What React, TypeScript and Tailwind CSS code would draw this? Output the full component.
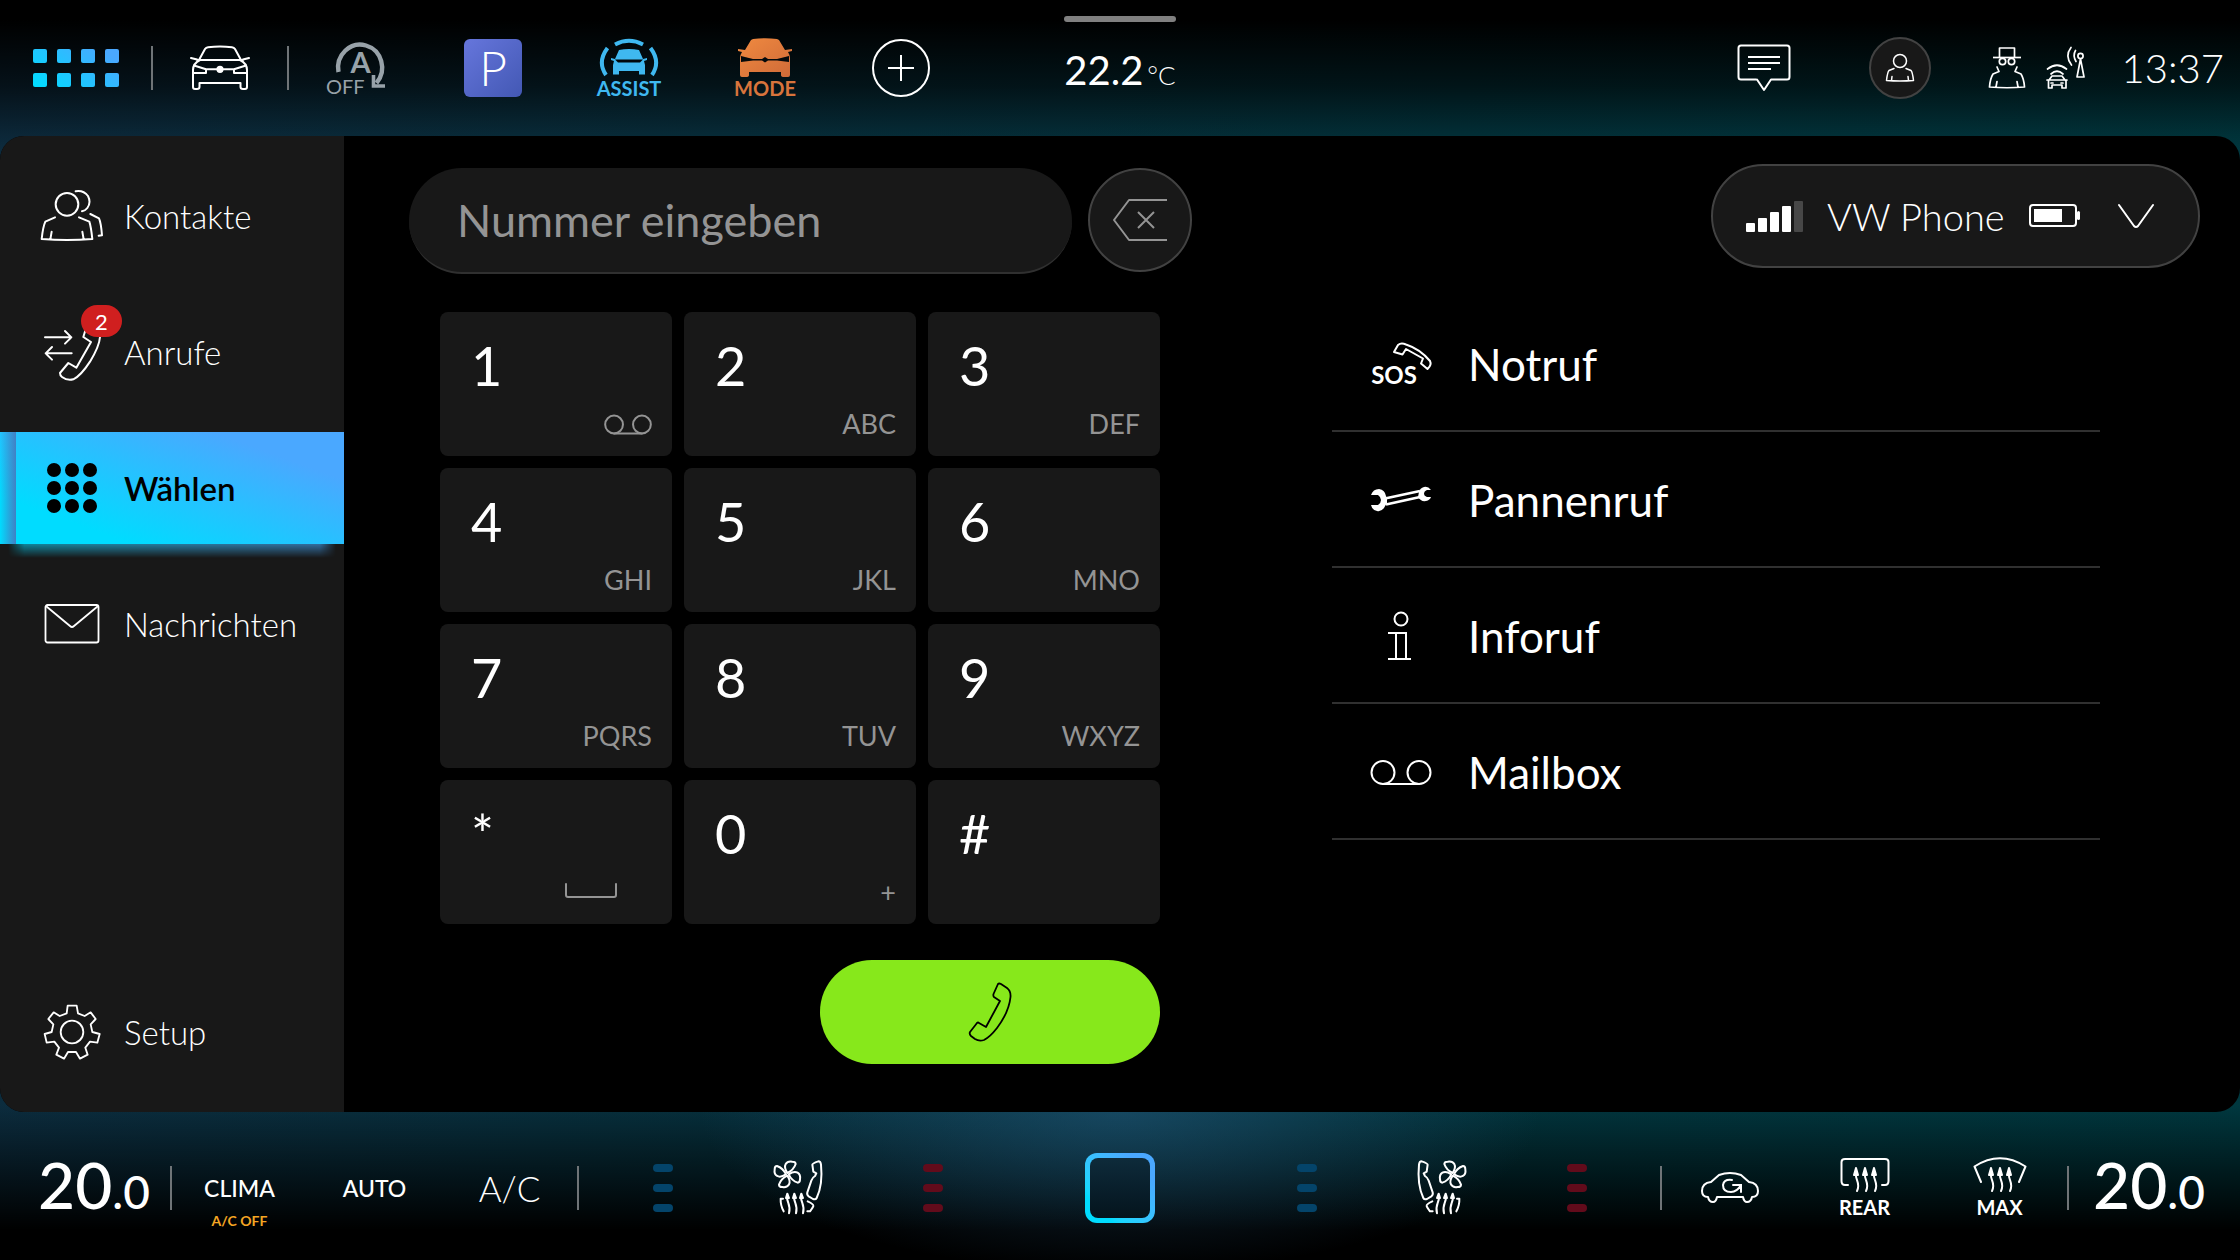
import type { ReactNode } from "react";

const BLUE = "#3fb8f0";

function Stroke({ w, h, box, sw = 2, children, color = "currentColor" }: { w: number; h: number; box?: string; sw?: number; color?: string; children: ReactNode }) {
  return (
    <svg width={w} height={h} viewBox={box ?? `0 0 ${w} ${h}`} fill="none" stroke={color} strokeWidth={sw} strokeLinejoin="round" strokeLinecap="round" aria-hidden="true" className="shrink-0">
      {children}
    </svg>
  );
}

/* ---------- header icons ---------- */

function AppGrid() {
  return (
    <svg width="88" height="40" viewBox="0 0 88 40" aria-hidden="true">
      <defs>
        <linearGradient id="apps" gradientUnits="userSpaceOnUse" x1="20" y1="50" x2="62" y2="-6">
          <stop offset="0" stopColor="#00dcff" />
          <stop offset="1" stopColor="#4aa8ff" />
        </linearGradient>
      </defs>
      {[1, 25].map((y) =>
        [1, 25, 49, 73].map((x) => <rect key={`${x}-${y}`} x={x} y={y} width="14" height="14" rx="2" fill="url(#apps)" />),
      )}
    </svg>
  );
}

function CarFront() {
  return (
    <Stroke w={60} h={46}>
      <path d="M9 15 L15 4 Q16 2.4 18 2.2 Q30 1 42 2.2 Q44 2.4 45 4 L51 15" />
      <path d="M7 15 H53 M1 13 L7 14.5 M59 13 L53 14.5" />
      <path d="M10 15 Q3 18.5 3 25 V42 Q3 44 5 44 H7 Q9.5 44 9.5 42 V38 H50.5 V42 Q50.5 44 53 44 H55 Q57 44 57 42 V25 Q57 18.5 50 15" />
      <path d="M4 20.5 L16 24.3 V28 H4 M56 20.5 L44 24.3 V28 H56 M16 24.3 H44" />
      <circle cx="30" cy="24.3" r="2.6" fill="currentColor" />
    </Stroke>
  );
}

function StartStop() {
  return (
    <svg width="62" height="54" viewBox="0 0 62 54" fill="none" stroke="#98a2a9" strokeWidth="4.4" aria-hidden="true" className="overflow-visible">
      <path d="M12.5 31 A22 23 0 1 1 50.5 42" />
      <path d="M47.5 34 V45 H59" strokeWidth="3.6" />
      <g fill="#98a2a9" stroke="none" fontFamily="Lato, sans-serif">
        <text x="34.5" y="32" fontSize="29" fontWeight="700" textAnchor="middle">A</text>
        <text x="0" y="53" fontSize="20">OFF</text>
      </g>
    </svg>
  );
}

function AssistIcon() {
  return (
    <svg width="60" height="40" viewBox="0 0 60 40" aria-hidden="true">
      <g fill="none" stroke={BLUE} strokeWidth="4">
        <path d="M16 6.5 Q30 -1 44 6.5" />
        <path d="M8.5 10 Q-2 24 7 37 M51.5 10 Q62 24 53 37" />
      </g>
      <path fill={BLUE} d="M20 12 Q30 10 40 12 L44 21 L48 20 V22 L45 23 L46 27 V36.5 H40 V33 H20 V36.5 H14 V27 L15 23 L12 22 V20 L16 21 Z" />
      <path d="M16 21.5 H44 L41 24.5 H19 Z" fill="#01080b" />
    </svg>
  );
}

function ModeIcon() {
  return (
    <svg width="54" height="40" viewBox="0 0 54 40" aria-hidden="true">
      <defs>
        <linearGradient id="mode" x1="0" y1="0" x2="1" y2="1">
          <stop offset="0" stopColor="#f08a40" />
          <stop offset="1" stopColor="#cf6a38" />
        </linearGradient>
      </defs>
      <path fill="url(#mode)" d="M15 1 Q27 -0.5 39 1 L41 2 L47 12 L54 11 V13 L50 14 Q52 17 52 20 V37 Q52 39 50 39 H46 Q43 39 43 37 V34 H11 V37 Q11 39 8 39 H4 Q2 39 2 37 V20 Q2 17 4 14 L0 13 V11 L7 12 L13 2 Z" />
      <path fill="#03090c" d="M3 18 L15 21 H24 L27 19 L30 21 H39 L51 18 V24 L39 22.5 H30 L27 24.5 L24 22.5 H15 L3 24 Z" />
    </svg>
  );
}

function MessageIcon() {
  return (
    <Stroke w={54} h={48}>
      <path d="M19 35.5 H4 Q1.5 35.5 1.5 33 V4 Q1.5 1.5 4 1.5 H50 Q52.5 1.5 52.5 4 V33 Q52.5 35.5 50 35.5 H34 L27 46 L20 35.5" />
      <path d="M11 13 H43 M11 19 H43 M11 25 H34" strokeLinecap="butt" />
    </Stroke>
  );
}

function PersonIcon() {
  return (
    <Stroke w={30} h={30} sw={1.5}>
      <circle cx="15" cy="8" r="6.5" />
      <path d="M9 15.5 L4 17.5 Q2.5 19 1.5 27.5 Q15 28.5 28.5 27.5 Q27.5 19 26 17.5 L21 15.5 M7 23.5 L6.5 27.5 M23 23.5 L23.5 27.5" />
    </Stroke>
  );
}

function IncognitoIcon() {
  return (
    <Stroke w={38} h={44} sw={1.7}>
      <path d="M11.5 11 V2 H26.5 V11" />
      <path d="M5 11.5 H33" strokeLinecap="butt" />
      <circle cx="14.5" cy="15.5" r="3.2" />
      <circle cx="23.5" cy="15.5" r="3.2" />
      <path d="M9 21 L11 25.5 L5 28 Q2 33 1.5 41 Q19 42.5 36.5 41 Q36 33 33 28 L27 25.5 L29 21 M9 35.5 L8 41 M29 35.5 L30 41" />
    </Stroke>
  );
}

function CarAntennaIcon() {
  return (
    <Stroke w={40} h={44} sw={1.7}>
      <path d="M1.5 23 Q11 15.5 20.5 23 M5 28 Q11 22.5 17 28" />
      <path d="M3 34 L6 30 H16 L19 34 M1 34 H21 M2.5 34 V42 H6 V39 H16 V42 H20 V34 M5 37 H7 M15 37 H17" />
      <circle cx="34.5" cy="10" r="2.6" />
      <path d="M34.5 13 L31 31 H38 Z M29.5 4.5 Q26.5 9.5 30 15.5 M25 1.5 Q18.5 10 25.5 19" />
    </Stroke>
  );
}

/* ---------- sidebar icons ---------- */

function ContactsIcon() {
  return (
    <Stroke w={64} h={54} box="120 149 192 162" sw={6}>
      <circle cx="201" cy="195" r="34" />
      <path d="M227 156 Q250 152 264 170 Q274 190 262 206 Q256 214 246 216" />
      <path d="M165 234 L136 247 Q129 262 125 299 Q201 305 277 299 Q273 262 268 247 L237 234 M155 277 L151 300 M247 277 L251 300" />
      <path d="M271 224 L297 237 Q303 250 306 288 L296 289" />
    </Stroke>
  );
}

function CallsIcon() {
  return (
    <Stroke w={60} h={60} box="126 545 180 180" sw={6}>
      <path d="M135 591 H214 M195 572 L214 591 L195 610 M215 639 H137 M156 620 L137 639 L156 658" />
      <path d="M262 550 L250 590 L273 605 L229 682 L205 668 L180 698 Q180 706 186 710 Q202 722 220 717 Q242 707 270 664 Q298 618 300 590 Q300 565 285 560 Z" />
    </Stroke>
  );
}

function DialIcon() {
  return (
    <svg width="50" height="50" viewBox="0 0 50 50" fill="currentColor" aria-hidden="true" className="shrink-0">
      {[7, 25, 43].map((y) => [7, 25, 43].map((x) => <circle key={`${x}-${y}`} cx={x} cy={y} r="7" />))}
    </svg>
  );
}

function MailIcon() {
  return (
    <Stroke w={56} h={40} sw={1.8}>
      <rect x="1.5" y="1" width="53" height="37.5" rx="2" />
      <path d="M2.5 2.5 L26 22 Q28 24 30 22 L53.5 2.5" />
    </Stroke>
  );
}

function GearIcon() {
  return (
    <Stroke w={58} h={56} box="129 132 174 168" sw={5.5}>
      <circle cx="216" cy="216" r="34" />
      <path d="M203 137 H230 L234 160 L254 168 L272 157 L287 177 L272 193 L277 216 L299 222 L292 248 L270 245 L256 263 L263 284 L240 296 L228 276 H204 L192 296 L169 284 L177 263 L163 245 L140 248 L134 222 L155 216 L160 193 L145 177 L161 157 L179 168 L200 160 Z" />
    </Stroke>
  );
}

/* ---------- content icons ---------- */

function VoicemailIcon({ w, h, sw }: { w: number; h: number; sw: number }) {
  return (
    <Stroke w={w} h={h} box="0 0 62 27" sw={sw}>
      <circle cx="13" cy="13.5" r="11.5" />
      <circle cx="49" cy="13.5" r="11.5" />
      <path d="M13 25 H49" />
    </Stroke>
  );
}

function SosIcon() {
  return (
    <svg width="62" height="46" viewBox="0 0 62 46" aria-hidden="true" className="shrink-0 overflow-visible">
      <path d="M24 11 L28 4 Q31 1.5 36 3.5 Q50 8 60 20 Q62 24 57.5 28 L51 22.5 L53 17.5 L36 8 L32.5 13.5 Z" fill="none" stroke="currentColor" strokeWidth="2" strokeLinejoin="round" />
      <text x="24" y="43" fontSize="24" fontWeight="700" textAnchor="middle" fill="currentColor" fontFamily="Lato, sans-serif">SOS</text>
    </svg>
  );
}

function WrenchIcon() {
  return (
    <svg width="62" height="30" viewBox="0 0 62 30" fill="none" stroke="currentColor" aria-hidden="true" className="shrink-0">
      <path d="M1 10 Q3 4 9 4 Q15 5 16 11 L17 14 V18 Q15 21 14 23 Q11 27 7 26 Q2 25 1 20 L8 20 Q11 18 11 15 Q11 12 8 10 Z" fill="currentColor" stroke="none" />
      <path d="M61 5 Q58 1 54 2 Q50 3 49 7 L48 12 Q51 17 56 16 Q60 15 61 12 L57 12 Q54 11 54 9 Q54 6 57 5 Z" fill="currentColor" stroke="none" />
      <path d="M15 13.5 L50 6 M16 19.5 L50 12" strokeWidth="2.8" />
    </svg>
  );
}

function InfoIcon() {
  return (
    <Stroke w={62} h={50}>
      <circle cx="31" cy="8" r="6.5" />
      <path d="M18 22 H36 V48 M26 22 V48 M18 48 H41" strokeLinecap="butt" strokeLinejoin="miter" />
    </Stroke>
  );
}

/* ---------- climate icons ---------- */

function SeatIcon({ mirrored = false }: { mirrored?: boolean }) {
  const petal = "M73 75 C58 52 70 38 88 41 Q98 41 98 48 Q92 66 73 75 Z";
  return (
    <svg width="70" height="80" viewBox="0 0 210 240" fill="none" stroke="currentColor" strokeWidth="6" strokeLinejoin="round" strokeLinecap="round" aria-hidden="true" className={mirrored ? "-scale-x-100" : ""}>
      {[0, 90, 180, 270].map((a) => (
        <path key={a} d={petal} transform={`rotate(${a} 73 79)`} />
      ))}
      <path d="M148 50 Q148 46 166 40 Q173 40 174 50 Q180 110 161 150 Q158 156 150 153 L137 145 Q131 141 133 133 L145 98 Q149 88 156 84 L160 76 L151 71 Z" />
      <path d="M134 160 Q152 168 151 174 Q150 178 141 190 L133 190 M60 152 H53 Q52 172 62 190" />
      {[75, 96, 117].map((x) => (
        <g key={x}>
          <path d={`M${x - 3} 146 C${x - 4} 165 ${x + 10} 170 ${x + 3} 196`} />
          <path d={`M${x - 2} 137 L${x - 6} 150 H${x + 3} Z`} fill="currentColor" />
        </g>
      ))}
    </svg>
  );
}

function RecircIcon() {
  return (
    <Stroke w={62} h={34}>
      <path d="M18 26 Q17 31 14 31 Q10 31 9 26 Q3 26 3 20 Q3 12 12 11 L20 4 Q31 0 42 4 L50 11 Q59 12 59 20 Q59 26 53 26 Q52 31 48 31 Q45 31 44 26 Z" />
      <path d="M33 9 Q25 8 24 14 Q24 21 32 21 Q38 21 42 14 M34 14 H42 V21" strokeLinejoin="miter" />
    </Stroke>
  );
}

function HeatArrows({ y }: { y: number }) {
  return (
    <g>
      {[16, 25, 34].map((x) => (
        <g key={x}>
          <path d={`M${x} ${y + 7} C${x - 1} ${y + 13} ${x + 5} ${y + 16} ${x + 1} ${y + 24}`} />
          <path d={`M${x} ${y + 1} L${x - 2} ${y + 8} H${x + 2} Z`} fill="currentColor" />
        </g>
      ))}
    </g>
  );
}

function RearIcon() {
  return (
    <Stroke w={50} h={38}>
      <path d="M8 28 H5 Q1.5 28 1.5 24 V5 Q1.5 2 5 2 H45 Q48.5 2 48.5 5 V24 Q48.5 28 45 28 H42" />
      <HeatArrows y={10} />
    </Stroke>
  );
}

function MaxIcon() {
  return (
    <Stroke w={54} h={38}>
      <path d="M8 25 L1.5 9.5 Q27 -7 52.5 9.5 L46 25" />
      <g transform="translate(2 0)">
        <HeatArrows y={10} />
      </g>
    </Stroke>
  );
}

/* ---------- layout pieces ---------- */

function HeaderButton({ label, children }: { label: string; children: ReactNode }) {
  return (
    <button type="button" aria-label={label} className="flex h-full w-[136px] flex-col items-center justify-center">
      {children}
    </button>
  );
}

function Divider() {
  return <div className="h-11 w-0.5 shrink-0 bg-[#6f7477]" />;
}

function Header() {
  return (
    <header className="relative flex h-[136px] items-center justify-between">
      <div className="flex h-full items-center">
        <button type="button" aria-label="Apps" className="flex w-[151px] justify-center">
          <AppGrid />
        </button>
        <Divider />
        <button type="button" aria-label="Fahrzeug" className="flex h-full w-[134px] items-center justify-center">
          <CarFront />
        </button>
        <Divider />
        <HeaderButton label="Start-Stopp aus"><StartStop /></HeaderButton>
        <HeaderButton label="Parken">
          <span className="flex size-[58px] items-center justify-center rounded-md bg-linear-to-br from-[#6676dc] to-[#4358b4] text-[48px] leading-none font-light">P</span>
        </HeaderButton>
        <HeaderButton label="Assist">
          <AssistIcon />
          <span className="text-[20px] leading-5 font-bold text-[#3fb8f0]">ASSIST</span>
        </HeaderButton>
        <HeaderButton label="Mode">
          <ModeIcon />
          <span className="text-[20px] leading-5 font-bold text-[#d8743c]">MODE</span>
        </HeaderButton>
        <HeaderButton label="Hinzufügen">
          <Stroke w={58} h={58}>
            <circle cx="29" cy="29" r="28" />
            <path d="M29 16 V42 M16 29 H42" strokeLinecap="butt" />
          </Stroke>
        </HeaderButton>
      </div>

      <div className="absolute inset-x-0 top-4 mx-auto h-1.5 w-28 rounded-full bg-[#808080]" />
      <p className="absolute inset-x-0 top-12 mx-auto flex w-40 items-baseline justify-center gap-1 text-[40px] leading-11">
        22.2<span className="text-[26px] font-light">°C</span>
      </p>

      <div className="flex h-full items-center pr-4">
        <HeaderButton label="Nachrichten"><MessageIcon /></HeaderButton>
        <HeaderButton label="Profil">
          <span className="flex size-[62px] items-center justify-center rounded-full border-2 border-[#424242] bg-[#181818]">
            <PersonIcon />
          </span>
        </HeaderButton>
        <div className="flex items-center gap-5 pl-5">
          <IncognitoIcon />
          <CarAntennaIcon />
        </div>
        <time className="pl-9 text-[40px] leading-none font-light">13:37</time>
      </div>
    </header>
  );
}

function NavItem({ icon, label, badge }: { icon: ReactNode; label: string; badge?: string }) {
  return (
    <button type="button" className="relative flex h-28 w-full items-center pl-9 text-[33px] font-light">
      <span className="flex w-[72px] justify-center">{icon}</span>
      <span className="pt-0.5 pl-4">{label}</span>
      {badge && (
        <span className="absolute top-[9px] left-[81px] flex h-8 w-[41px] items-center justify-center rounded-full bg-[#d01f1f] text-[22px] font-normal">{badge}</span>
      )}
    </button>
  );
}

function Sidebar() {
  return (
    <nav aria-label="Telefon" className="flex w-[344px] shrink-0 flex-col gap-6 bg-[#181818] py-6">
      <NavItem icon={<ContactsIcon />} label="Kontakte" />
      <NavItem icon={<CallsIcon />} label="Anrufe" badge="2" />
      <button type="button" aria-current="page" className="relative flex h-28 w-full items-center bg-linear-[20deg,#00dcff_20%,#4aa8ff_80%] pl-9 text-[33px] font-semibold text-black">
        <span className="absolute inset-y-0 left-0 w-4 bg-linear-to-r from-transparent to-[#4180c4]" />
        <span className="flex w-[72px] justify-center"><DialIcon /></span>
        <span className="pt-0.5 pl-4">Wählen</span>
        <span className="absolute inset-x-2 top-full h-3.5 bg-linear-to-r from-[#00b4d0] to-[#3f8fd8] opacity-70 mask-b-from-0% mask-x-from-95%" />
      </button>
      <NavItem icon={<MailIcon />} label="Nachrichten" />
      <div className="mt-auto">
        <NavItem icon={<GearIcon />} label="Setup" />
      </div>
    </nav>
  );
}

const KEYS: { digit: string; sub?: ReactNode }[] = [
  { digit: "1", sub: <VoicemailIcon w={48} h={21} sw={2.6} /> },
  { digit: "2", sub: "ABC" },
  { digit: "3", sub: "DEF" },
  { digit: "4", sub: "GHI" },
  { digit: "5", sub: "JKL" },
  { digit: "6", sub: "MNO" },
  { digit: "7", sub: "PQRS" },
  { digit: "8", sub: "TUV" },
  { digit: "9", sub: "WXYZ" },
  {
    digit: "*",
    sub: (
      <span className="block pr-[35px]">
        <Stroke w={52} h={18}>
          <path d="M1 1 V12 Q1 14 3 14 H49 Q51 14 51 12 V1" />
        </Stroke>
      </span>
    ),
  },
  { digit: "0", sub: "+" },
  { digit: "#" },
];

function Dialer() {
  return (
    <section aria-label="Wählen" className="flex flex-col">
      <div className="flex items-start gap-4">
        <input
          aria-label="Nummer eingeben"
          placeholder="Nummer eingeben"
          className="h-[106px] w-[663px] rounded-full border-b-2 border-[#303030] bg-[#181818] px-12 text-[45px] text-white outline-none placeholder:text-[#949494]"
        />
        <button type="button" aria-label="Löschen" className="flex size-[104px] items-center justify-center rounded-full border-2 border-[#424242] bg-[#181818] text-[#949494]">
          <Stroke w={56} h={44}>
            <path d="M55 2 H17 L2 22 L17 42 H55 M26 14 L42 30 M42 14 L26 30" strokeLinecap="butt" />
          </Stroke>
        </button>
      </div>

      <div className="mt-[38px] ml-[31px] grid w-[720px] grid-cols-3 gap-3">
        {KEYS.map((k) => (
          <button key={k.digit} type="button" className="flex h-36 flex-col justify-between rounded-lg bg-[#181818] pt-6 pr-5 pb-3.5 pl-[31px] text-left">
            <span className="text-[54px] leading-[60px]">{k.digit}</span>
            <span className="flex h-9 items-center justify-end text-[27px] leading-9 text-[#949494]">{k.sub}</span>
          </button>
        ))}
      </div>

      <button type="button" aria-label="Anrufen" className="mt-9 ml-[411px] flex h-[104px] w-[340px] items-center justify-center rounded-full bg-[#87e81b] text-black">
        <Stroke w={44} h={60} sw={1.8}>
          <path d="M30 2 Q31 1 33 2 L39 6 Q43 9 42.5 15 Q41 30 29 46 Q22 55 16 58 Q11 59.5 7 57 L3 54 Q1 52 2 50 L9 41 Q10 40 11 41 L18 45 L32 19 L26 15 Q25 14 25.5 12 Z" />
        </Stroke>
      </button>
    </section>
  );
}

const SERVICES = [
  { label: "Notruf", icon: <SosIcon /> },
  { label: "Pannenruf", icon: <WrenchIcon /> },
  { label: "Inforuf", icon: <InfoIcon /> },
  { label: "Mailbox", icon: <VoicemailIcon w={62} h={27} sw={2} /> },
];

function PhonePanel() {
  return (
    <section aria-label="Dienste" className="flex w-[868px] flex-col">
      <div className="flex h-[104px] w-[489px] items-center self-end rounded-full border-2 border-[#424242] bg-[#181818] pr-[43px] pl-[33px]">
        <svg width="57" height="31" viewBox="0 0 57 31" fill="#fff" aria-hidden="true" className="shrink-0">
          <rect x="0" y="22" width="9" height="9" rx="1" />
          <rect x="12" y="17" width="9" height="14" rx="1" />
          <rect x="24" y="11" width="9" height="20" rx="1" />
          <rect x="36" y="5" width="9" height="26" rx="1" />
          <rect x="48" y="0" width="9" height="31" rx="1" fill="#474747" />
        </svg>
        <select aria-label="Telefon" defaultValue="vw" className="ml-6 flex-1 appearance-none bg-transparent text-[38px] leading-[60px] font-light text-white outline-none">
          <option value="vw">VW Phone</option>
        </select>
        <Stroke w={52} h={24}>
          <rect x="1" y="1" width="46" height="21" rx="3" />
          <rect x="5" y="5" width="28" height="13" fill="currentColor" stroke="none" />
          <path d="M49.5 8.5 V14.5" strokeWidth="3" />
        </Stroke>
        <span className="ml-9 flex">
          <Stroke w={38} h={26}>
            <path d="M2 2 L17 23 Q19 25 21 23 L36 2" />
          </Stroke>
        </span>
      </div>
      <ul className="mt-7 w-[768px]">
        {SERVICES.map((s) => (
          <li key={s.label} className="border-b-2 border-[#303030]">
            <button type="button" className="flex h-[134px] w-full items-center gap-9 pt-0.5 pl-[38px] text-[44px]">
              <span className="flex w-[62px] justify-center">{s.icon}</span>
              {s.label}
            </button>
          </li>
        ))}
      </ul>
    </section>
  );
}

function Temp({ side }: { side: string }) {
  return (
    <button type="button" aria-label={`Temperatur ${side} 20.0`} className="flex w-[136px] items-baseline justify-center text-[64px] leading-[76px] font-medium">
      20<span className="text-[46px]">.0</span>
    </button>
  );
}

function ClimateButton({ label, children }: { label: string; children: ReactNode }) {
  return (
    <button type="button" aria-label={label} className="relative flex h-full w-[135px] flex-col items-center justify-center">
      {children}
    </button>
  );
}

function Levels({ kind }: { kind: "cool" | "heat" }) {
  const color = kind === "cool" ? "bg-[#04446a]" : "bg-[#620b1b]";
  return (
    <span className="flex flex-col gap-3">
      {[0, 1, 2].map((i) => (
        <span key={i} className={`h-2 w-5 rounded-full ${color}`} />
      ))}
    </span>
  );
}

function SeatGroup({ side, mirrored }: { side: string; mirrored?: boolean }) {
  return (
    <div className="mx-4 flex h-full">
      <ClimateButton label={`${side} kühler`}><Levels kind="cool" /></ClimateButton>
      <ClimateButton label={`Sitzklima ${side}`}><SeatIcon mirrored={mirrored} /></ClimateButton>
      <ClimateButton label={`${side} wärmer`}><Levels kind="heat" /></ClimateButton>
    </div>
  );
}

function Footer() {
  return (
    <footer className="flex h-[148px] items-center justify-between pt-1">
      <div className="flex h-full items-center pl-[26px]">
        <Temp side="links" />
        <span className="w-2" />
        <Divider />
        <ClimateButton label="Clima, A/C aus">
          <span className="text-[23px] leading-7 font-medium">CLIMA</span>
          <span className="absolute top-[95px] text-[14px] leading-5 font-bold text-[#f5a623]">A/C OFF</span>
        </ClimateButton>
        <ClimateButton label="Auto"><span className="text-[23px] leading-7 font-medium">AUTO</span></ClimateButton>
        <ClimateButton label="A/C"><span className="text-[35px] leading-10 font-light">A/C</span></ClimateButton>
        <Divider />
        <SeatGroup side="links" />
      </div>

      <button type="button" aria-label="Home" className="size-[70px] rounded-xl bg-linear-to-tr from-[#00dcff] from-20% to-[#4aa8ff] to-80% p-[5px]">
        <span className="block size-full rounded-lg bg-linear-to-b from-[#0e2b3b] to-[#05141d]" />
      </button>

      <div className="flex h-full items-center pr-[23px]">
        <SeatGroup side="rechts" mirrored />
        <Divider />
        <ClimateButton label="Umluft"><RecircIcon /></ClimateButton>
        <ClimateButton label="Heckscheibe">
          <RearIcon />
          <span className="text-[20px] leading-6 font-bold">REAR</span>
        </ClimateButton>
        <ClimateButton label="Frontscheibe">
          <MaxIcon />
          <span className="text-[20px] leading-6 font-bold">MAX</span>
        </ClimateButton>
        <Divider />
        <span className="w-3" />
        <Temp side="rechts" />
      </div>
    </footer>
  );
}

export default function App() {
  return (
    <div className="flex min-h-screen flex-col bg-black bg-[radial-gradient(ellipse_420px_160px_at_50%_1112px,rgba(40,95,135,.5),transparent),linear-gradient(to_bottom,#000_20px,rgba(0,0,0,.6)_86px,rgba(0,0,0,.1)_136px,transparent_150px,transparent_1105px,#000_1230px),linear-gradient(100deg,#0d2b3e,#02333c_60%,#00383f)] font-[Lato,'Noto_Sans',sans-serif] text-white">
      <Header />
      <main className="flex flex-1 overflow-hidden rounded-3xl bg-black">
        <Sidebar />
        <div className="flex flex-1 justify-between pr-10 pl-[65px]">
          <div className="pt-8"><Dialer /></div>
          <div className="pt-7"><PhonePanel /></div>
        </div>
      </main>
      <Footer />
    </div>
  );
}
